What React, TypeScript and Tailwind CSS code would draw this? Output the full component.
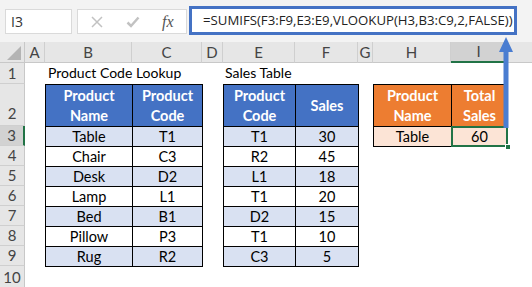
import React from 'react'

const lookupRows = [
  ['Table', 'T1'],
  ['Chair', 'C3'],
  ['Desk', 'D2'],
  ['Lamp', 'L1'],
  ['Bed', 'B1'],
  ['Pillow', 'P3'],
  ['Rug', 'R2'],
]

const salesRows = [
  ['T1', '30'],
  ['R2', '45'],
  ['L1', '18'],
  ['T1', '20'],
  ['D2', '15'],
  ['T1', '10'],
  ['C3', '5'],
]

const columns = ['A', 'B', 'C', 'D', 'E', 'F', 'G', 'H', 'I']

// grid row for each sheet row (row 1 of the grid is the column header strip)
const rowStart: Record<number, string> = {
  1: 'row-start-2',
  2: 'row-start-3',
  3: 'row-start-4',
  4: 'row-start-5',
  5: 'row-start-6',
  6: 'row-start-7',
  7: 'row-start-8',
  8: 'row-start-9',
  9: 'row-start-10',
  10: 'row-start-11',
}

function FormulaBar() {
  return (
    <div className="h-[42px] bg-[#f3f3f3] flex items-start pl-[5px] pt-[9px]">
      <div className="w-[67px] h-[25px] bg-white border border-[#dadada] flex items-center pl-[5px] text-[14px] text-[#333] font-['Open_Sans']">
        I3
      </div>
      <div className="ml-[5px] w-[110px] h-[25px] bg-white border border-[#dadada] flex items-center">
        <svg width="12" height="12" viewBox="0 0 12 12" className="ml-[13px]">
          <path d="M1 1L11 11M11 1L1 11" stroke="#c2c2c2" strokeWidth={1.5} />
        </svg>
        <svg width="14" height="12" viewBox="0 0 14 12" className="ml-[23px]">
          <path d="M1.5 6.5L5 10L12.5 1.5" stroke="#c2c2c2" strokeWidth={2.5} fill="none" />
        </svg>
        <span className="ml-[22px] italic text-[16px] text-[#555] font-['Liberation_Serif']">fx</span>
      </div>
      <div className="ml-[2px] -mt-[3px] w-[328px] h-[29px] bg-white border-[3px] border-[#4472c4] flex items-center pl-[11px] text-[13.2px] text-[#222] font-['Open_Sans'] whitespace-nowrap">
        =SUMIFS(F3:F9,E3:E9,VLOOKUP(H3,B3:C9,2,FALSE))
      </div>
    </div>
  )
}

function LookupTable() {
  return (
    <div className="w-[158px] grid grid-cols-[86px_69px] grid-rows-[41px_repeat(7,19px)] gap-px p-px bg-black text-[14.5px]">
      <div className="bg-[#4472c4] text-white font-bold flex items-center justify-center text-center leading-[20px]">
        Product<br />Name
      </div>
      <div className="bg-[#4472c4] text-white font-bold flex items-center justify-center text-center leading-[20px]">
        Product<br />Code
      </div>
      {lookupRows.map(([name, code], i) => (
        <React.Fragment key={name}>
          <div className={`${i % 2 === 0 ? 'bg-[#d9e1f2]' : 'bg-white'} flex items-center justify-center`}>{name}</div>
          <div className={`${i % 2 === 0 ? 'bg-[#d9e1f2]' : 'bg-white'} flex items-center justify-center`}>{code}</div>
        </React.Fragment>
      ))}
    </div>
  )
}

function SalesTable() {
  return (
    <div className="w-[136px] grid grid-cols-[71px_62px] grid-rows-[41px_repeat(7,19px)] gap-px p-px bg-black text-[14.5px]">
      <div className="bg-[#4472c4] text-white font-bold flex items-center justify-center text-center leading-[20px]">
        Product<br />Code
      </div>
      <div className="bg-[#4472c4] text-white font-bold flex items-center justify-center">Sales</div>
      {salesRows.map(([code, sales], i) => (
        <React.Fragment key={i}>
          <div className={`${i % 2 === 0 ? 'bg-[#d9e1f2]' : 'bg-white'} flex items-center justify-center`}>{code}</div>
          <div className={`${i % 2 === 0 ? 'bg-[#d9e1f2]' : 'bg-white'} flex items-center justify-center`}>{sales}</div>
        </React.Fragment>
      ))}
    </div>
  )
}

function TotalTable() {
  return (
    <div className="w-[135px] grid grid-cols-[77px_55px] grid-rows-[41px_19px] gap-px p-px bg-black text-[14.5px]">
      <div className="bg-[#ed7d31] text-white font-bold flex items-center justify-center text-center leading-[20px]">
        Product<br />Name
      </div>
      <div className="bg-[#ed7d31] text-white font-bold flex items-center justify-center text-center leading-[20px]">
        Total<br />Sales
      </div>
      <div className="bg-[#fce4d6] flex items-center justify-center">Table</div>
      <div className="relative bg-[#fce4d6] flex items-center justify-center">
        60
        {/* active cell outline + fill handle */}
        <div className="absolute -left-[1px] -top-[1px] -right-[1px] -bottom-[1px] border-2 border-[#217346]" />
        <div className="absolute -right-[4px] -bottom-[4px] w-[6px] h-[6px] bg-[#217346] border border-white" />
      </div>
    </div>
  )
}

function RowHeader({ n, active, end }: { n: number; active?: boolean; end?: boolean }) {
  return (
    <div
      className={`col-start-1 ${rowStart[n]} flex justify-center text-[15px] text-[#444] border-b border-[#cfcfcf] ${
        end ? 'items-end pb-[1px]' : 'items-center'
      } ${active ? 'bg-[#d2d2d2] border-r-2 border-r-[#217346]' : 'bg-[#e6e6e6] border-r border-r-[#c8c8c8]'}`}
    >
      {n}
    </div>
  )
}

export default function App() {
  return (
    <div className="relative w-[532px] h-[287px] overflow-hidden bg-white font-['Lato'] text-black">
      <FormulaBar />

      <div className="grid grid-cols-[25px_20px_87px_70px_21px_72px_63px_15px_78px_56px_1fr] grid-rows-[21px_21px_42px_repeat(7,20px)_1fr] h-[245px]">
        {/* column headers */}
        <div className="col-start-1 row-start-1 bg-[#e6e6e6] border-r border-b border-[#c8c8c8] relative">
          <svg width="14" height="14" viewBox="0 0 14 14" className="absolute right-[3px] bottom-[2px]">
            <path d="M14 0V14H0Z" fill="#b4b4b4" />
          </svg>
        </div>
        {columns.map((c) => (
          <div
            key={c}
            className={`row-start-1 flex items-center justify-center text-[15px] text-[#444] border-r border-[#cfcfcf] ${
              c === 'I' ? 'bg-[#d2d2d2] border-b-2 border-b-[#217346]' : 'bg-[#e6e6e6] border-b border-b-[#c8c8c8]'
            }`}
          >
            {c}
          </div>
        ))}
        <div className="row-start-1 bg-[#e6e6e6] border-b border-[#c8c8c8]" />

        {/* sheet row headers */}
        {[1, 2, 3, 4, 5, 6, 7, 8, 9, 10].map((n) => (
          <RowHeader key={n} n={n} active={n === 3} end={n === 2} />
        ))}

        {/* titles in row 1 */}
        <div className="col-start-3 col-span-2 row-start-2 flex items-end pl-[3px] pb-[1px] text-[14px] whitespace-nowrap">
          Product Code Lookup
        </div>
        <div className="col-start-6 col-span-2 row-start-2 flex items-end pl-[2px] pb-[1px] text-[14px] whitespace-nowrap">
          Sales Table
        </div>

        {/* tables from row 2 down */}
        <div className="col-start-3 col-span-2 row-start-3 row-span-8">
          <LookupTable />
        </div>
        <div className="col-start-6 col-span-2 row-start-3 row-span-8">
          <SalesTable />
        </div>
        <div className="col-start-9 col-span-2 row-start-3 row-span-8">
          <TotalTable />
        </div>
      </div>

      {/* callout arrow from the formula to the result cell */}
      <svg width="20" height="95" viewBox="0 0 20 95" className="absolute left-[496px] top-[35px]">
        <path d="M10 2L17 17H3Z" fill="#4a7dd1" />
        <rect x="7.5" y="15" width="5" height="78" fill="#4a7dd1" />
      </svg>
    </div>
  )
}
